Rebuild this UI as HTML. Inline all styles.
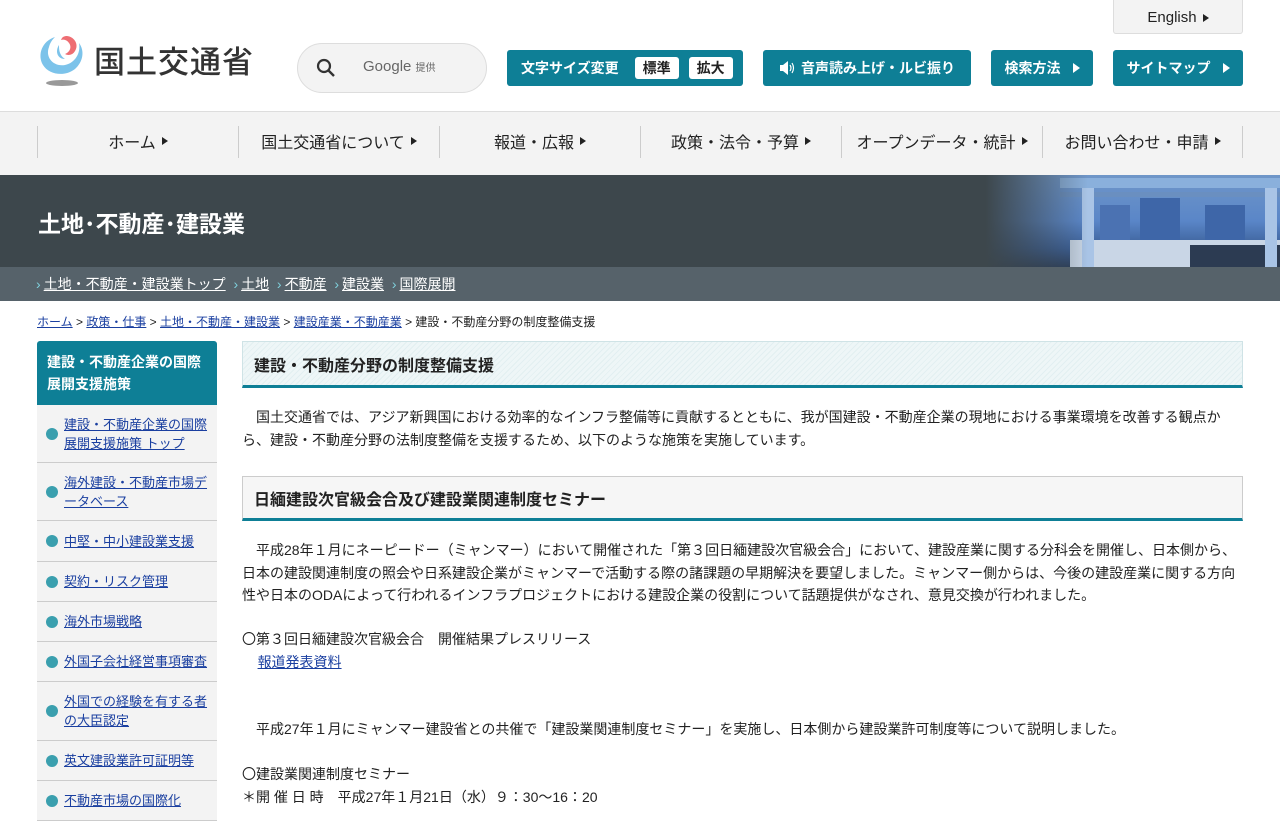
<!DOCTYPE html>
<html><head><meta charset="utf-8"><style>
*{margin:0;padding:0;box-sizing:border-box}
body{width:1280px;height:800px;overflow:hidden;background:#fff;font-family:"Liberation Sans","Noto Sans CJK JP",sans-serif;color:#222;position:relative}
.abs{position:absolute}
.btn{position:absolute;top:50px;height:36px;background:#0e7f96;color:#fff;border-radius:3px;font-size:14px;font-weight:bold;display:flex;align-items:center;justify-content:center;gap:6px}
.tri{display:inline-block;width:0;height:0;border-left:7px solid currentColor;border-top:5px solid transparent;border-bottom:5px solid transparent;margin-left:6px}
.nav{position:absolute;top:111px;left:0;width:1280px;height:64px;background:#f3f3f3;border-top:1px solid #ddd}
.nav div{position:absolute;top:14px;height:32px;border-left:1px solid #ccc;font-size:16px;display:flex;align-items:center;justify-content:center;width:201px;padding-bottom:2px}
.nav .tri{border-left-width:6px;border-top-width:4px;border-bottom-width:4px}
a{color:#1a3fa0;text-decoration:underline}
.side{position:absolute;left:37px;top:341px;width:180px}
.side .hd{background:#0e7f96;color:#fff;font-weight:bold;font-size:14px;line-height:22px;padding:10px 10px;border-radius:3px 3px 0 0;height:64px}
.side .it{background:#f3f3f3;border-bottom:1px solid #ccc;font-size:13px;line-height:19px;padding:0 8px 0 27px;display:flex;align-items:center;position:relative}
.side .it:before{content:"";position:absolute;left:9px;top:50%;margin-top:-6px;width:12px;height:12px;border-radius:50%;background:#3a9fae}
.h2{position:absolute;left:242px;width:1001px;font-weight:bold;font-size:16px;padding-left:11px;display:flex;align-items:center}
p{position:absolute;left:242px;width:1001px;font-size:14px;line-height:22.5px}
.sn span{color:#7fd0dc;margin-right:3px}
</style></head><body>
<svg class="abs" style="left:37px;top:33px" width="50" height="54" viewBox="0 0 50 54">
<path d="M18 4 C5 8 0 22 6 32 C12 42 28 44 38 36 C46 29 48 18 42 10 C44 20 38 30 28 32 C16 34 8 24 12 14 C13 10 15 7 18 4Z" fill="#7cc3ea"/>
<path d="M30 3 C38 4 42 12 38 18 C36 22 31 23 28 21 C33 19 35 14 32 10 C30 7 27 6 24 7 C25 4 27 3 30 3Z" fill="#ee6e73"/>
<path d="M22 12 C18 18 20 26 28 26 C22 22 22 16 22 12Z" fill="#7cc3ea"/>
<ellipse cx="25" cy="50" rx="16" ry="3" fill="#999"/></svg>
<div class="abs" style="left:94px;top:37px;font-size:31px;font-weight:500;color:#333;letter-spacing:1px">国土交通省</div>
<div class="abs" style="left:297px;top:43px;width:190px;height:50px;border:1px solid #ddd;border-radius:25px;background:#f3f3f3"></div>
<svg class="abs" style="left:316px;top:58px" width="20" height="20" viewBox="0 0 20 20"><circle cx="8" cy="8" r="6" stroke="#333" stroke-width="2.2" fill="none"/><path d="M12.5 12.5L18 18" stroke="#333" stroke-width="2.4"/></svg>
<div class="abs" style="left:363px;top:58px;font-size:15px;color:#666">Google <span style="font-size:10px">提供</span></div>
<div class="abs" style="left:1113px;top:0;width:130px;height:34px;border:1px solid #ddd;border-top:none;border-radius:0 0 3px 3px;background:#f3f3f3;font-size:15px;display:flex;align-items:center;justify-content:center;padding-top:2px">English<span class="tri" style="border-left-width:6px;border-top-width:4px;border-bottom-width:4px"></span></div>
<div class="btn" style="left:507px;width:236px;justify-content:flex-start;padding-left:14px">文字サイズ変更<span style="background:#fff;color:#222;padding:1px 8px;border-radius:3px;margin-left:10px">標準</span><span style="background:#fff;color:#222;padding:1px 8px;border-radius:3px;margin-left:4px">拡大</span></div>
<div class="btn" style="left:763px;width:208px"><svg width="16" height="16" viewBox="0 0 16 16"><path d="M1 5h3l5-4v14l-5-4H1z" fill="#fff"/><path d="M11 5q2 3 0 6M13 3q3 5 0 10" stroke="#fff" fill="none" stroke-width="1.2"/></svg>音声読み上げ・ルビ振り</div>
<div class="btn" style="left:991px;width:102px">検索方法<span class="tri"></span></div>
<div class="btn" style="left:1113px;width:130px">サイトマップ<span class="tri"></span></div>
<div class="nav">
<div style="left:37px">ホーム<span class="tri"></span></div>
<div style="left:238px">国土交通省について<span class="tri"></span></div>
<div style="left:439px">報道・広報<span class="tri"></span></div>
<div style="left:640px">政策・法令・予算<span class="tri"></span></div>
<div style="left:841px">オープンデータ・統計<span class="tri"></span></div>
<div style="left:1042px;border-right:1px solid #ccc">お問い合わせ・申請<span class="tri"></span></div>
</div>
<div class="abs" style="left:0;top:175px;width:1280px;height:92px;background:#3d474c"></div>
<div class="abs" style="left:960px;top:175px;width:320px;height:92px;background:linear-gradient(180deg,#6f96c8 0%,#5a86c8 50%,#3a5e96 80%,#2c3f5c 100%)"></div>
<div class="abs" style="left:1060px;top:178px;width:220px;height:10px;background:#8ab0dc"></div>
<div class="abs" style="left:1060px;top:192px;width:220px;height:5px;background:#6a8fc0"></div>
<div class="abs" style="left:1140px;top:198px;width:40px;height:62px;background:#3e66a8"></div>
<div class="abs" style="left:1100px;top:205px;width:30px;height:55px;background:#4b72b2"></div>
<div class="abs" style="left:1205px;top:205px;width:40px;height:55px;background:#3e66a8"></div>
<div class="abs" style="left:1070px;top:240px;width:210px;height:27px;background:#c9d6e6"></div>
<div class="abs" style="left:1190px;top:245px;width:90px;height:22px;background:#2c3b52"></div>
<div class="abs" style="left:1082px;top:188px;width:12px;height:79px;background:#a9c4e6"></div>
<div class="abs" style="left:1265px;top:188px;width:12px;height:79px;background:#a9c4e6"></div>
<div class="abs" style="left:960px;top:175px;width:320px;height:92px;background:linear-gradient(90deg,#3d474c 0%,#3d474c 8%,rgba(61,71,76,0) 40%)"></div>
<div class="abs" style="left:38px;top:205px;font-size:23px;font-weight:bold;color:#fff">土地･不動産･建設業</div>
<div class="abs sn" style="left:0;top:267px;width:1280px;height:34px;background:#56626a;font-size:14px;color:#fff;padding:7px 0 0 36px;white-space:nowrap">
<span>›</span><u>土地・不動産・建設業トップ</u>&nbsp; <span>›</span><u>土地</u>&nbsp; <span>›</span><u>不動産</u>&nbsp; <span>›</span><u>建設業</u>&nbsp; <span>›</span><u>国際展開</u></div>
<div class="abs" style="left:37px;top:313px;font-size:12px;white-space:nowrap"><a>ホーム</a> &gt; <a>政策・仕事</a> &gt; <a>土地・不動産・建設業</a> &gt; <a>建設産業・不動産業</a> &gt; 建設・不動産分野の制度整備支援</div>
<div class="side">
<div class="hd">建設・不動産企業の国際展開支援施策</div>
<div class="it" style="height:58px"><a>建設・不動産企業の国際展開支援施策 トップ</a></div>
<div class="it" style="height:58px"><a>海外建設・不動産市場データベース</a></div>
<div class="it" style="height:41px"><a>中堅・中小建設業支援</a></div>
<div class="it" style="height:40px"><a>契約・リスク管理</a></div>
<div class="it" style="height:40px"><a>海外市場戦略</a></div>
<div class="it" style="height:40px"><a>外国子会社経営事項審査</a></div>
<div class="it" style="height:59px"><a>外国での経験を有する者の大臣認定</a></div>
<div class="it" style="height:40px"><a>英文建設業許可証明等</a></div>
<div class="it" style="height:40px"><a>不動産市場の国際化</a></div>
</div>
<div class="h2" style="top:341px;height:47px;background:repeating-linear-gradient(135deg,#eef6f7 0 3px,#e2eff1 3px 4px);border:1px solid #cfe3e6;border-bottom:3px solid #0e7f96">建設・不動産分野の制度整備支援</div>
<p style="top:406px;text-indent:14px">国土交通省では、アジア新興国における効率的なインフラ整備等に貢献するとともに、我が国建設・不動産企業の現地における事業環境を改善する観点から、建設・不動産分野の法制度整備を支援するため、以下のような施策を実施しています。</p>
<div class="h2" style="top:476px;height:45px;background:#f6f6f6;border:1px solid #ccc;border-bottom:3px solid #0e7f96">日緬建設次官級会合及び建設業関連制度セミナー</div>
<p style="top:539px;text-indent:14px">平成28年１月にネーピードー（ミャンマー）において開催された「第３回日緬建設次官級会合」において、建設産業に関する分科会を開催し、日本側から、日本の建設関連制度の照会や日系建設企業がミャンマーで活動する際の諸課題の早期解決を要望しました。ミャンマー側からは、今後の建設産業に関する方向性や日本のODAによって行われるインフラプロジェクトにおける建設企業の役割について話題提供がなされ、意見交換が行われました。</p>
<p style="top:628px">〇第３回日緬建設次官級会合　開催結果プレスリリース<br>&nbsp;&nbsp;&nbsp;&nbsp;<a>報道発表資料</a></p>
<p style="top:718px;text-indent:14px">平成27年１月にミャンマー建設省との共催で「建設業関連制度セミナー」を実施し、日本側から建設業許可制度等について説明しました。</p>
<p style="top:763px">〇建設業関連制度セミナー<br>＊開 催 日 時　平成27年１月21日（水）９：30～16：20</p>
</body></html>
